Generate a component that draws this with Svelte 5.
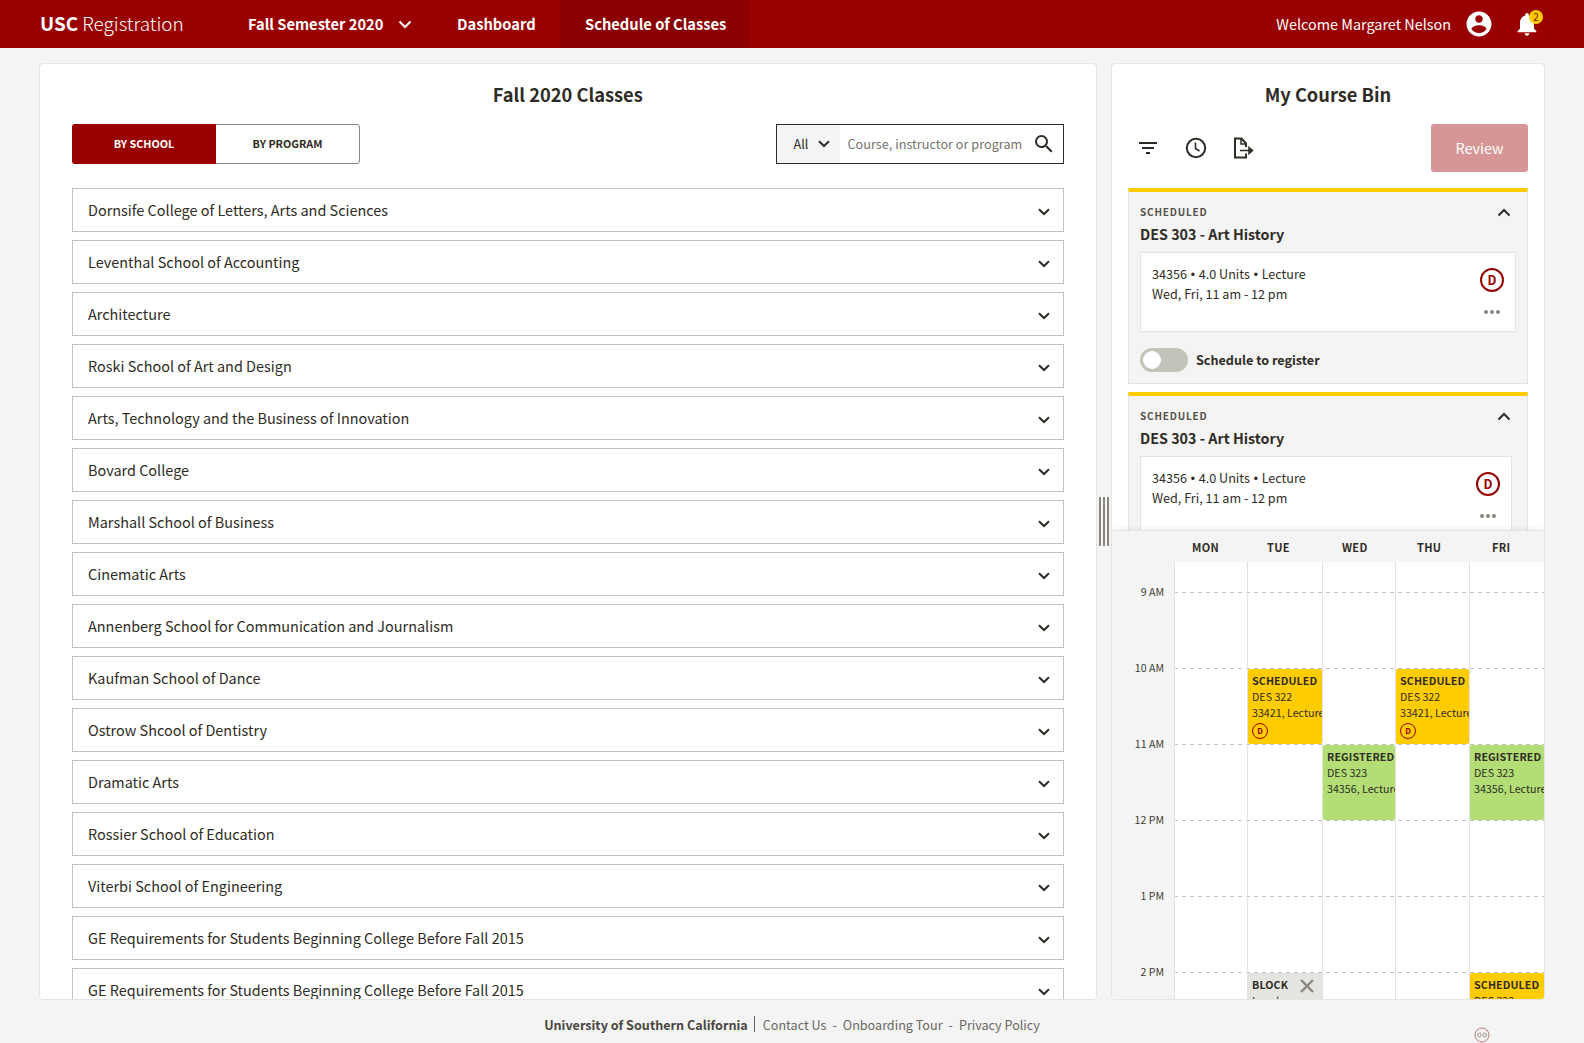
<script>
  const schools = [
    'Dornsife College of Letters, Arts and Sciences',
    'Leventhal School of Accounting',
    'Architecture',
    'Roski School of Art and Design',
    'Arts, Technology and the Business of Innovation',
    'Bovard College',
    'Marshall School of Business',
    'Cinematic Arts',
    'Annenberg School for Communication and Journalism',
    'Kaufman School of Dance',
    'Ostrow Shcool of Dentistry',
    'Dramatic Arts',
    'Rossier School of Education',
    'Viterbi School of Engineering',
    'GE Requirements for Students Beginning College Before Fall 2015',
    'GE Requirements for Students Beginning College Before Fall 2015'
  ];
  const hours = ['9 AM', '10 AM', '11 AM', '12 PM', '1 PM', '2 PM'];
  const sched = { kind: 'scheduled', title: 'SCHEDULED', lines: ['DES 322', '33421, Lecture'], badge: true, top: 107, h: 75 };
  const reg = { kind: 'registered', title: 'REGISTERED', lines: ['DES 323', '34356, Lecture'], top: 183, h: 75 };
  const days = [
    { name: 'MON', events: [] },
    { name: 'TUE', events: [sched, { kind: 'block', title: 'BLOCK', lines: ['Lunch'], close: true, top: 411, h: 75 }] },
    { name: 'WED', events: [reg] },
    { name: 'THU', events: [sched] },
    { name: 'FRI', events: [reg, { kind: 'scheduled', title: 'SCHEDULED', lines: ['DES 323'], top: 411, h: 75 }] }
  ];
</script>

<div class="app">
  <header class="top">
    <div class="brand"><b>USC</b> Registration</div>
    <nav class="nav">
      <div class="nav-item term">Fall Semester 2020
        <svg width="14" height="9" viewBox="0 0 14 9"><path d="M1.500 1.500 7 7l5.500-5.500" fill="none" stroke="#fff" stroke-width="2"/></svg>
      </div>
      <div class="nav-item dash">Dashboard</div>
      <div class="nav-item active">Schedule of Classes</div>
    </nav>
    <div class="user">
      <span class="welcome">Welcome Margaret Nelson</span>
      <svg class="avatar" width="30" height="30" viewBox="0 0 24 24"><path fill="#fff" d="M12 2C6.480 2 2 6.480 2 12s4.480 10 10 10 10-4.480 10-10S17.520 2 12 2zm0 3c1.660 0 3 1.340 3 3s-1.340 3-3 3-3-1.340-3-3 1.340-3 3-3zm0 14.200c-2.500 0-4.710-1.280-6-3.220.030-1.990 4-3.080 6-3.080 1.990 0 5.970 1.090 6 3.080-1.290 1.940-3.500 3.220-6 3.220z"/></svg>
      <div class="bell">
        <svg width="28" height="28" viewBox="0 0 24 24"><path fill="#fff" d="M12 22c1.100 0 2-.9 2-2h-4c0 1.100.9 2 2 2zm6-6v-5c0-3.070-1.630-5.640-4.500-6.320V4c0-.83-.67-1.500-1.500-1.500s-1.500.67-1.500 1.500v.68C7.640 5.360 6 7.920 6 11v5l-2 2v1h16v-1l-2-2z"/></svg>
        <span class="count">2</span>
      </div>
    </div>
  </header>

  <main class="page">
    <section class="panel classes">
      <h2>Fall 2020 Classes</h2>
      <div class="tools">
        <div class="seg">
          <div class="seg-on">BY SCHOOL</div>
          <div class="seg-off">BY PROGRAM</div>
        </div>
        <div class="search">
          <div class="scope"><span class="scope-t">All</span>
            <svg width="12" height="8" viewBox="0 0 12 8"><path d="M1 1.200 6 6l5-4.800" fill="none" stroke="#2f2c26" stroke-width="2"/></svg>
          </div>
          <span class="ph">Course, instructor or program</span>
          <svg class="glass" width="24" height="24" viewBox="0 0 24 24"><path fill="#2f2c26" d="M15.500 14h-.79l-.28-.27A6.470 6.470 0 0 0 16 9.500 6.500 6.500 0 1 0 9.500 16c1.610 0 3.090-.59 4.230-1.570l.27.28v.79l5 4.990L20.490 19l-4.990-5zm-6 0C7.010 14 5 11.990 5 9.500S7.010 5 9.500 5 14 7.010 14 9.500 11.990 14 9.500 14z"/></svg>
        </div>
      </div>
      <div class="rows">
        {#each schools as s}
          <div class="row">
            <span class="row-t">{s}</span>
            <svg width="12" height="8" viewBox="0 0 12 8"><path d="M1 1.200 6 6l5-4.800" fill="none" stroke="#2f2c26" stroke-width="2"/></svg>
          </div>
        {/each}
      </div>
      <div class="handle"><i></i><i></i><i></i></div>
    </section>

    <section class="panel bin">
      <h2>My Course Bin</h2>
      <div class="bin-tools">
        <svg class="t1" width="24" height="24" viewBox="0 0 24 24"><path fill="#2f2c26" d="M10 18h4v-2h-4v2zM3 6v2h18V6H3zm3 7h12v-2H6v2z"/></svg>
        <svg class="t2" width="24" height="24" viewBox="0 0 24 24"><circle cx="12" cy="12" r="9.200" fill="none" stroke="#2f2c26" stroke-width="2"/><path d="M11.500 6.500V12.500l4 2.500" fill="none" stroke="#2f2c26" stroke-width="1.600"/></svg>
        <svg class="t3" width="24" height="24" viewBox="0 0 24 24"><path d="M15 11V7.500L10.500 2.500H4v19h11v-4" fill="none" stroke="#2f2c26" stroke-width="2"/><path d="M10 3v5h5" fill="none" stroke="#2f2c26" stroke-width="1.500"/><path d="M9 14.500h11M18 11.500l3.500 3-3.500 3z" fill="#2f2c26" stroke="#2f2c26" stroke-width="1.500"/></svg>
        <div class="review">Review</div>
      </div>
      <div class="bin-list">
        <article class="course">
          <div class="c-head"><span class="c-tag">SCHEDULED</span>
            <svg width="14" height="9" viewBox="0 0 14 9"><path d="M1.500 7.500 7 2l5.500 5.500" fill="none" stroke="#2f2c26" stroke-width="2"/></svg>
          </div>
          <div class="c-title">DES 303 - Art History</div>
          <div class="c-box">
            <div class="c-lines"><div>34356 <span class="bul">•</span> 4.0 Units <span class="bul">•</span> Lecture</div><div>Wed, Fri, 11 am - 12 pm</div></div>
            <div class="c-side"><span class="d">D</span><span class="dots"><i></i><i></i><i></i></span></div>
          </div>
          <div class="c-toggle"><span class="switch"><i></i></span><b>Schedule to register</b></div>
        </article>
        <article class="course second">
          <div class="c-head"><span class="c-tag">SCHEDULED</span>
            <svg width="14" height="9" viewBox="0 0 14 9"><path d="M1.500 7.500 7 2l5.500 5.500" fill="none" stroke="#2f2c26" stroke-width="2"/></svg>
          </div>
          <div class="c-title">DES 303 - Art History</div>
          <div class="c-box">
            <div class="c-lines"><div>34356 <span class="bul">•</span> 4.0 Units <span class="bul">•</span> Lecture</div><div>Wed, Fri, 11 am - 12 pm</div></div>
            <div class="c-side"><span class="d">D</span><span class="dots"><i></i><i></i><i></i></span></div>
          </div>
        </article>
      </div>
      <div class="cal">
        <div class="cal-head">
          {#each days as d}<div class="day-name">{d.name}</div>{/each}
        </div>
        <div class="cal-body">
          <div class="hours">
            {#each hours as h}
              <div class="hour"><span class="h-label">{h}</span><span class="h-line"></span></div>
            {/each}
          </div>
          <div class="cols">
            <div></div>
            {#each days as d}
              <div class="col">
                {#each d.events as e}
                  <div class="ev {e.kind}" style="top:{e.top}px;height:{e.h}px">
                    <div class="ev-title">{e.title}</div>
                    {#each e.lines as l}<div class="ev-line">{l}</div>{/each}
                    {#if e.badge}<span class="d small">D</span>{/if}
                    {#if e.close}
                      <svg class="ev-x" width="16" height="16" viewBox="0 0 16 16"><path d="M2 2l12 12M14 2 2 14" stroke="#8a867e" stroke-width="2.400" fill="none"/></svg>
                    {/if}
                  </div>
                {/each}
              </div>
            {/each}
          </div>
        </div>
      </div>
    </section>
  </main>

  <footer class="foot">
    <b>University of Southern California</b><span class="bar"></span>
    <span>Contact Us</span><span class="sep">-</span><span>Onboarding Tour</span><span class="sep">-</span><span>Privacy Policy</span>
    <svg class="cc" width="16" height="16" viewBox="0 0 16 16"><circle cx="8" cy="8" r="7" fill="none" stroke="#b87a76" stroke-width="1"/><path d="M7 6.200H5.500a1.800 1.800 0 0 0 0 3.600H7M9 6.200h1.500a1.800 1.800 0 0 1 0 3.600H9M6 8h4" fill="none" stroke="#9a8a86" stroke-width="1"/></svg>
  </footer>
</div>

<style>
  :global(body) {
    margin: 0;
    background: #f4f4f4;
    font-family: "Noto Sans CJK SC", "Source Sans Pro", "Lato", sans-serif;
    color: #2f2c26;
  }
  .app { width: 1584px; height: 1043px; overflow: hidden; display: flex; flex-direction: column; }

  .top { height: 48px; flex: none; background: #990000; color: #fff; display: flex; align-items: center; padding-left: 40px; }
  .brand { font-size: 18.900px; line-height: 46px; height: 48px; width: 208px; flex: none; font-weight: 300; }
  .brand b { font-weight: 700; }
  .nav { display: flex; align-items: stretch; height: 48px; font-weight: 700; font-size: 14.700px; line-height: 48px; }
  .nav-item { display: flex; align-items: center; gap: 15px; }
  .term { width: 209px; }
  .dash { width: 103px; }
  .active { background: #8a0000; padding: 0 25px; width: 190px; box-sizing: border-box; white-space: nowrap; }
  .user { margin-left: auto; display: flex; align-items: center; font-size: 14.400px; padding-right: 43px; }
  .welcome { margin-right: 13px; padding-bottom: 2px; }
  .avatar { margin-right: 19px; }
  .bell { position: relative; width: 28px; height: 28px; }
  .bell svg { display: block; }
  .count { position: absolute; right: -2px; top: 0; width: 14px; height: 14px; border-radius: 50%; background: #ffcc00; color: #7a1000; font-size: 10px; line-height: 14px; text-align: center; }

  .page { height: 936px; flex: none; margin-top: 15px; padding: 0 39.500px 0 39px; display: grid; grid-template-columns: 1057.500px 434px; gap: 14.500px; }
  .panel { background: #fff; border: 1px solid #e4e4e2; border-radius: 4px; box-sizing: border-box; position: relative; overflow: hidden; }
  .classes { overflow: visible; }
  h2 { margin: 0; text-align: center; font-size: 18.300px; font-weight: 700; line-height: 28px; padding-top: 16px; }

  .tools { display: flex; justify-content: space-between; padding: 16px 32px 0 32px; }
  .seg { width: 288px; height: 40px; display: flex; box-sizing: border-box; border: 1px solid #8a867e; border-radius: 3px; font-size: 10.800px; font-weight: 700; line-height: 37px; text-align: center; }
  .seg-on { width: 144px; margin: -1px 0 -1px -1px; background: #990000; color: #fff; line-height: 39px; border-radius: 3px 0 0 3px; }
  .seg-off { flex: 1; }
  .search { width: 288px; height: 40px; box-sizing: border-box; border: 1px solid #2f2c26; display: flex; align-items: center; font-size: 12.700px; }
  .scope { width: 63px; height: 100%; flex: none; background: #f4f4f4; display: flex; align-items: center; gap: 10px; padding-left: 17px; box-sizing: border-box; }
  .scope-t { padding-bottom: 1px; }
  .ph { color: #77736b; margin-left: 8px; white-space: nowrap; padding-bottom: 2px; }
  .glass { margin-left: auto; margin-right: 7px; flex: none; }

  .rows { height: 811px; overflow: hidden; margin-top: 24px; padding: 0 32px; display: flex; flex-direction: column; gap: 8px; }
  .row { height: 44px; flex: none; box-sizing: border-box; border: 1px solid #c2c1ba; display: flex; align-items: center; justify-content: space-between; padding: 0 13px 0 15px; font-size: 14.450px; }
  .row-t { padding-bottom: 2px; }
  .row svg { margin-top: 3px; }

  .handle { position: absolute; left: 1059px; top: 433px; height: 49px; display: flex; gap: 2px; }
  .handle i { width: 2px; background: #8a867e; }

  .bin { display: flex; flex-direction: column; }
  .bin-tools { height: 48px; margin-top: 16px; padding: 0 16px 0 24px; display: flex; align-items: center; flex: none; }
  .t2 { margin-left: 24px; }
  .t3 { margin-left: 23px; }
  .review { margin-left: auto; width: 97px; height: 48px; background: #d69696; color: #fff; border-radius: 3px; font-size: 14.400px; line-height: 48px; text-align: center; }

  .bin-list { flex: 1; min-height: 0; overflow: hidden; padding: 16px 16px 0; display: flex; flex-direction: column; gap: 8px; }
  .course { flex: none; background: #f4f4f4; border: 1px solid #e2e2df; border-top: 4px solid #ffcc00; padding: 0 11px 11px; height: 196px; box-sizing: border-box; }
  .second { height: 300px; }
  .c-head { display: flex; align-items: center; justify-content: space-between; height: 16px; padding: 12px 5px 0 0; }
  .c-tag { font-size: 10px; font-weight: 700; letter-spacing: .8px; color: #55514a; margin-top: -2px; }
  .c-title { font-size: 14.300px; font-weight: 700; line-height: 22px; margin-top: 3px; }
  .c-box { margin-top: 7px; height: 80px; box-sizing: border-box; background: #fff; border: 1px solid #e2e2df; padding: 10px 11px; display: flex; justify-content: space-between; font-size: 12.600px; line-height: 20px; }
  .c-lines { padding-top: 1px; }
  .bul { font-family: "Liberation Sans", sans-serif; font-size: 12px; line-height: 0; margin: 0 1px; }
  .second .c-box { margin-right: 4px; }
  .c-side { display: flex; flex-direction: column; align-items: center; padding-top: 5px; }
  .d { width: 24px; height: 24px; box-sizing: border-box; border: 2px solid #990000; border-radius: 50%; color: #990000; font-size: 12.600px; font-weight: 700; line-height: 20px; text-align: center; display: block; }
  .dots { display: flex; gap: 2px; margin-top: 18px; }
  .dots i { width: 4px; height: 4px; border-radius: 50%; background: #8a867e; }
  .c-toggle { display: flex; align-items: center; gap: 8px; margin-top: 16px; font-size: 12.600px; }
  .c-toggle b { padding-bottom: 2px; }
  .switch { width: 48px; height: 24px; border-radius: 12px; background: #c2c1ba; position: relative; display: block; }
  .switch i { position: absolute; left: 3px; top: 3px; width: 18px; height: 18px; border-radius: 50%; background: #fff; }

  .cal { flex: none; height: 468px; border-top: 1px solid #e2e2df; background: #f4f4f4; box-shadow: 0 -2px 5px rgba(0,0,0,.06); position: relative; overflow: hidden; }
  .cols { display: grid; grid-template-columns: 62px 73px 75px 73px 74px 1fr; }
  .cal-head { height: 31px; font-size: 11px; font-weight: 700; line-height: 32px; letter-spacing: .3px; display: grid; grid-template-columns: repeat(5, 75px); padding-left: 80px; }
  .cal-body { position: relative; height: 437px; background: linear-gradient(to right, #f4f4f4 62px, #fff 62px); }
  .hours { padding-top: 30px; }
  .hour { height: 76px; display: flex; }
  .h-label { width: 52px; margin-right: 10px; text-align: right; font-size: 10.600px; line-height: 16px; margin-top: -8px; color: #3f3c36; flex: none; }
  .h-line { flex: 1; height: 1px; background: repeating-linear-gradient(to right, #c2c1ba 0 4px, transparent 4px 8px); }
  .cols { position: absolute; inset: 0; }
  .col { border-left: 1px solid #e2e2df; position: relative; }
  .ev { position: absolute; left: 0; right: 0; box-sizing: border-box; padding: 4px 0 0 4px; font-size: 10.700px; line-height: 16px; overflow: hidden; white-space: nowrap; border-radius: 2px; }
  .ev-title { font-weight: 700; letter-spacing: .1px; }
  .scheduled { background: #ffcc00; }
  .registered { background: #b2de75; }
  .block { background: #e4e4e0; left: -1px; padding-left: 5px; }
  .ev-x { position: absolute; right: 7px; top: 5px; }
  .d.small { width: 16px; height: 16px; border-width: 1px; font-size: 8px; line-height: 14px; margin-top: 2px; }

  .foot { flex: 1; position: relative; display: flex; justify-content: center; align-items: center; padding-top: 6px; box-sizing: border-box; font-size: 12.600px; color: #6b675f; white-space: nowrap; }
  .foot b { color: #4a463f; font-weight: 700; }
  .bar { width: 1px; height: 16px; background: #6b675f; margin: 0 8px 0 6px; }
  .sep { margin: 0 6px; }
  .cc { position: absolute; left: 1474px; top: 28px; }
</style>
